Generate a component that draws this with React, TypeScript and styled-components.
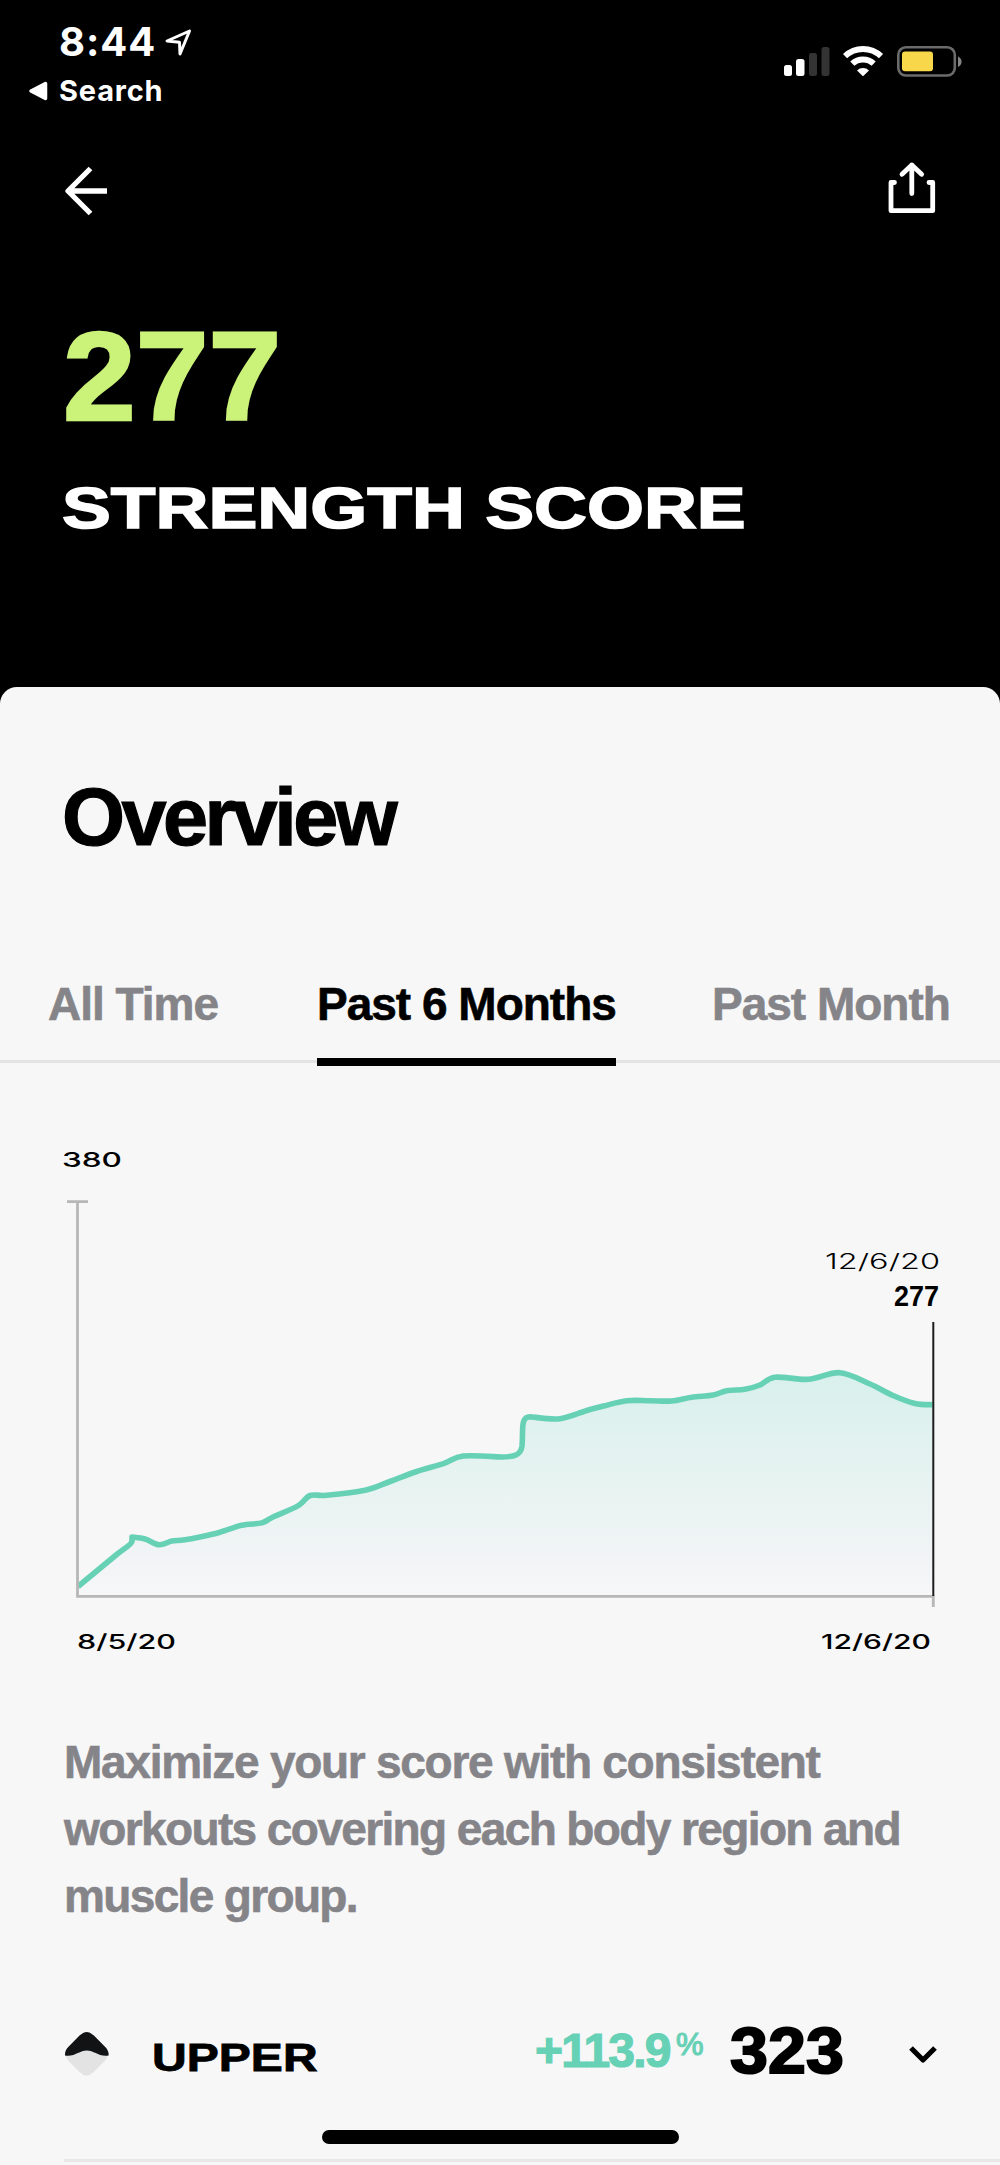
import React from "react";
import styled, { createGlobalStyle } from "styled-components";

const GlobalStyle = createGlobalStyle`
  html, body { margin: 0; padding: 0; background: #f7f7f7; }
  *, *::before, *::after { box-sizing: border-box; }
`;

const SANS = `"Liberation Sans", Arial, sans-serif`;
const SYSTEM = `Inter, "Liberation Sans", sans-serif`;
const MINT = "#67d1b6";

const Screen = styled.main`
  position: relative;
  width: 1000px;
  height: 2165px;
  overflow: hidden;
  background: #f7f7f7;
  font-family: ${SANS};
  color: #000;
`;

const Hero = styled.header`
  display: flex;
  flex-direction: column;
  height: 705px;
  background: #000;
  color: #fff;
`;

const StatusBar = styled.div`
  display: flex;
  justify-content: space-between;
  height: 106px;
  padding: 22px 37px 0 28px;
  font-family: ${SYSTEM};
`;

const Clock = styled.div`
  display: flex;
  align-items: center;
  gap: 8px;
  padding-left: 31px;
  font-size: 40px;
  font-weight: 700;
  line-height: 40px;
  letter-spacing: 0.9px;
`;

const BackToApp = styled.div`
  display: flex;
  align-items: center;
  gap: 11px;
  margin-top: 14px;
  font-size: 29px;
  font-weight: 650;
  line-height: 30px;
  letter-spacing: 0.8px;
`;

const Indicators = styled.div`
  display: flex;
  align-items: flex-start;
  gap: 13px;
  padding-top: 23px;
`;

const NavBar = styled.nav`
  display: flex;
  justify-content: space-between;
  height: 60px;
  margin-top: 54px;
  padding: 0 62px;
`;

const Wide = styled.span<{ $x: number }>`
  display: inline-block;
  white-space: nowrap;
  transform: scaleX(${(p) => p.$x});
  transform-origin: left;
`;

const Score = styled.div`
  margin: 91px 0 0 63px;
  color: #cbf279;
  font-size: 127px;
  font-weight: 700;
  line-height: 130px;
  -webkit-text-stroke: 2.5px #cbf279;
`;

const ScoreLabel = styled.h1`
  margin: 37px 0 0 62px;
  font-size: 57px;
  font-weight: 700;
  line-height: 60px;
  -webkit-text-stroke: 1.5px #fff;
`;

const Sheet = styled.section`
  height: 1478px;
  margin-top: -18px;
  padding-top: 85px;
  border-radius: 17px 17px 0 0;
  background: #f7f7f7;
`;

const Heading = styled.h2`
  margin: 0 0 117px 62px;
  font-size: 81px;
  font-weight: 700;
  line-height: 90px;
  letter-spacing: -3.5px;
  -webkit-text-stroke: 1.2px #000;
`;

const Tabs = styled.div`
  display: grid;
  grid-template-columns: 269px 395px auto;
  height: 84px;
  padding-left: 48px;
  border-bottom: 3px solid #e4e4e4;
`;

const Tab = styled.div<{ $active?: boolean }>`
  position: relative;
  justify-self: start;
  font-size: 46px;
  font-weight: 700;
  line-height: 50px;
  letter-spacing: -1px;
  -webkit-text-stroke: 0.6px currentColor;
  white-space: nowrap;
  color: ${(p) => (p.$active ? "#000" : "#858489")};
  ${(p) =>
    p.$active &&
    `&::after {
      content: "";
      position: absolute;
      left: 0;
      top: 79px;
      width: 299px;
      height: 8px;
      background: #000;
    }`}
`;

const ChartSvg = styled.svg`
  display: block;
  width: 1000px;
  height: 665px;
`;

const Advice = styled.p`
  margin: 1px 0 19px;
  padding: 0 60px 0 64px;
  color: #858489;
  font-size: 46px;
  font-weight: 700;
  line-height: 67px;
  -webkit-text-stroke: 0.6px #858489;
`;

const Line = styled.span<{ $tracking: number }>`
  display: block;
  white-space: nowrap;
  letter-spacing: ${(p) => p.$tracking}px;
`;

const RegionRow = styled.div`
  display: grid;
  grid-template-columns: 88px 383px 141px 54px 1fr;
  align-items: center;
  height: 213px;
  margin-left: 64px;
  border-bottom: 3px solid #e8e8e8;
`;

const RegionName = styled.div`
  margin-top: 7px;
  font-size: 38px;
  font-weight: 700;
  line-height: 40px;
  -webkit-text-stroke: 0.8px #000;
`;

const Delta = styled.div`
  margin-bottom: 6px;
  color: ${MINT};
  font-size: 48px;
  font-weight: 700;
  line-height: 50px;
  letter-spacing: -1.8px;
  -webkit-text-stroke: 1.2px ${MINT};
`;

const Percent = styled.div`
  margin-bottom: 19px;
  color: ${MINT};
  font-size: 31px;
  line-height: 30px;
  -webkit-text-stroke: 1.2px ${MINT};
`;

const RegionScore = styled.div`
  display: flex;
  align-items: center;
  justify-content: space-between;
  padding-right: 62px;
  font-size: 65px;
  font-weight: 700;
  line-height: 70px;
  -webkit-text-stroke: 2px #000;
`;

const RegionValue = styled.span`
  margin-bottom: 7px;
`;

const HomeIndicator = styled.div`
  position: absolute;
  left: 322px;
  top: 2130px;
  width: 357px;
  height: 14px;
  border-radius: 7px;
  background: #000;
`;

const LocationIcon = () => (
  <svg width="30" height="32" viewBox="164 25 30 32" fill="none">
    <path d="M189.5 30 167 40l12.5 1.2L180 53z" stroke="#fff" strokeWidth="3" strokeLinejoin="round" />
  </svg>
);

const BackTriangle = () => (
  <svg width="20" height="20" viewBox="0 0 20 20">
    <path d="M3 10 17.5 2.5v15z" fill="#fff" stroke="#fff" strokeWidth="3.5" strokeLinejoin="round" />
  </svg>
);

const SignalIcon = () => (
  <svg width="46" height="32" viewBox="0 0 46 32">
    <rect x="0" y="20" width="8" height="11" rx="2.5" fill="#fff" />
    <rect x="12" y="14" width="8.5" height="17" rx="2.5" fill="#fff" />
    <rect x="25" y="8" width="8" height="23" rx="2.5" fill="#333" />
    <rect x="37.5" y="2" width="8" height="29" rx="2.5" fill="#333" />
  </svg>
);

const WifiIcon = () => (
  <svg width="41" height="32" viewBox="0 0 41 32" fill="none" stroke="#fff" strokeWidth="6">
    <path d="M2 11.2A26 26 0 0 1 38 11.2" />
    <path d="M9.3 18.6A15.8 15.8 0 0 1 30.7 18.6" />
    <path d="M14 25.4a8.6 8.6 0 0 1 12 0L20.6 30.8a.9.9 0 0 1-1.2 0z" fill="#fff" stroke="none" />
  </svg>
);

const BatteryIcon = () => (
  <svg width="66" height="33" viewBox="0 0 66 33">
    <rect x="1.3" y="2.3" width="56.5" height="28.2" rx="7.5" fill="none" stroke="#6b6b6c" strokeWidth="2.6" />
    <rect x="5" y="6.5" width="31" height="19.7" rx="3" fill="#f8d74a" />
    <path d="M61 11.5c4.8 2 4.8 8.5 0 10.5z" fill="#858588" />
  </svg>
);

const BackArrow = () => (
  <svg width="50" height="60" viewBox="62 160 50 60" fill="none" stroke="#fff" strokeWidth="5.3">
    <path d="M90.5 168.5 68 191l22.5 22.5M68 191h39" strokeLinejoin="round" />
  </svg>
);

const ShareIcon = () => (
  <svg width="50" height="60" viewBox="888 160 50 60" fill="none" stroke="#fff" strokeWidth="4.8" strokeLinecap="round" strokeLinejoin="round">
    <path d="M894.5 182.500H891V210.700H932.700V182.500H929" />
    <path d="M911.8 193.500V165M902 174.300 911.800 165l9.800 9.300" />
  </svg>
);

const UpperBodyIcon = () => (
  <svg width="46" height="46" viewBox="0 0 46 46">
    <path d="M15.5 4.300q7.500-7.600 15 0L42 15.500q7 7.500 0 15L30.500 41.700q-7.500 7.600-15 0L4 30.500q-7-7.500 0-15z" transform="translate(1 1) scale(.94 .96)" fill="#e3e3e3" />
    <path d="M1 24.600Q.5 19.500 4.500 15.700L15.500 4.600q7.200-7.200 14.400 0L41 15.700q4 3.800 3.600 8.900c-10 1.500-14.300-5-21.800-5S11 26.100 1 24.600z" fill="#121315" />
  </svg>
);

const Chevron = () => (
  <svg width="30" height="24" viewBox="0 0 30 24" fill="none">
    <path d="M3 6 15 18 27 6" stroke="#000" strokeWidth="5.2" strokeLinejoin="round" />
  </svg>
);

type Point = [number, number];

const beforeJump: Point[] = [
  [132, 1537], [145, 1539], [159.3, 1544.8], [171.7, 1541], [183.3, 1540], [200, 1537],
  [220, 1532.2], [241.7, 1525.3], [261.7, 1522.9], [271.7, 1517.7], [298.3, 1505.7],
  [310, 1495.5], [326.7, 1495.3], [365, 1490.2], [390, 1481.5], [416.7, 1471.5], [443.3, 1463.7],
  [463.3, 1456], [501.7, 1457],
];
const afterJump: Point[] = [
  [530, 1416.7], [560, 1418.7], [588.3, 1410], [605, 1405.7], [626.7, 1400.7], [650, 1400.7], [671.7, 1401],
  [691.7, 1397.3], [713.3, 1395], [726.7, 1390.7], [745, 1389.3], [760, 1385], [775, 1377.2],
  [808.3, 1379.3], [840, 1372.7], [870, 1384], [893, 1395.5], [915, 1403.5], [932.5, 1404.7],
];

// Catmull-Rom spline through the points, written as cubic segments.
const smooth = (pts: Point[]) =>
  pts
    .slice(1)
    .map((p, i) => {
      const a = pts[Math.max(i - 1, 0)];
      const b = pts[i];
      const d = pts[Math.min(i + 2, pts.length - 1)];
      return `C${b[0] + (p[0] - a[0]) / 6} ${b[1] + (p[1] - a[1]) / 6} ${p[0] - (d[0] - b[0]) / 6} ${p[1] - (d[1] - b[1]) / 6} ${p[0]} ${p[1]}`;
    })
    .join("");

const curve =
  "M78 1586.5L116.7 1554.5C124 1548.5 131 1545 132 1541.5L132 1537" +
  smooth(beforeJump) +
  "C515 1457 521 1454.5 522 1446C523.5 1430 520 1417 530 1416.7" +
  smooth(afterJump);

const ScoreChart = () => (
  <ChartSvg viewBox="0 1063 1000 665">
    <defs>
      <linearGradient id="area" gradientUnits="userSpaceOnUse" x1="0" y1="1372" x2="0" y2="1596">
        <stop offset="0" stopColor="#d8f0ed" />
        <stop offset="0.5" stopColor="#e7f3f1" />
        <stop offset="0.85" stopColor="#f2f4f6" />
        <stop offset="1" stopColor="#f7f7f8" />
      </linearGradient>
    </defs>
    <path d={`${curve}V1596H78Z`} fill="url(#area)" />
    <path d={curve} fill="none" stroke={MINT} strokeWidth="5.6" strokeLinejoin="round" />
    <path d="M67 1201.7H88M77.5 1202V1596.3H933.3V1607" fill="none" stroke="#b7b7b7" strokeWidth="2.8" />
    <path d="M933.3 1322V1596" stroke="#1c1c1c" strokeWidth="2" />
    <g fontFamily={SYSTEM} fill="#000">
      <text x="62" y="1166.5" fontSize="20.5" fontWeight="500" textLength="60" lengthAdjust="spacingAndGlyphs">380</text>
      <text x="825" y="1268.5" fontSize="21" fontWeight="300" textLength="115" lengthAdjust="spacingAndGlyphs">12/6/20</text>
      <text x="77" y="1649" fontSize="20.5" fontWeight="500" textLength="99" lengthAdjust="spacingAndGlyphs">8/5/20</text>
      <text x="821" y="1649" fontSize="20.5" fontWeight="500" textLength="110" lengthAdjust="spacingAndGlyphs">12/6/20</text>
      <text x="894" y="1305.7" fontFamily={SANS} fontSize="29" fontWeight="700" textLength="45" lengthAdjust="spacingAndGlyphs">277</text>
    </g>
  </ChartSvg>
);

export default function App() {
  return (
    <Screen>
      <GlobalStyle />
      <Hero>
        <StatusBar>
          <div>
            <Clock>8:44 <LocationIcon /></Clock>
            <BackToApp><BackTriangle />Search</BackToApp>
          </div>
          <Indicators>
            <SignalIcon />
            <WifiIcon />
            <BatteryIcon />
          </Indicators>
        </StatusBar>
        <NavBar>
          <BackArrow />
          <ShareIcon />
        </NavBar>
        <Score><Wide $x={1.03}>277</Wide></Score>
        <ScoreLabel><Wide $x={1.285}>STRENGTH SCORE</Wide></ScoreLabel>
      </Hero>
      <Sheet>
        <Heading>Overview</Heading>
        <Tabs>
          <Tab>All Time</Tab>
          <Tab $active>Past 6 Months</Tab>
          <Tab>Past Month</Tab>
        </Tabs>
        <ScoreChart />
        <Advice>
          <Line $tracking={-1.27}>Maximize your score with consistent</Line>
          <Line $tracking={-1.61}>workouts covering each body region and</Line>
          <Line $tracking={-1.65}>muscle group.</Line>
        </Advice>
        <RegionRow>
          <UpperBodyIcon />
          <RegionName><Wide $x={1.265}>UPPER</Wide></RegionName>
          <Delta>+113.9</Delta>
          <Percent>%</Percent>
          <RegionScore>
            <RegionValue><Wide $x={1.05}>323</Wide></RegionValue>
            <Chevron />
          </RegionScore>
        </RegionRow>
      </Sheet>
      <HomeIndicator />
    </Screen>
  );
}
